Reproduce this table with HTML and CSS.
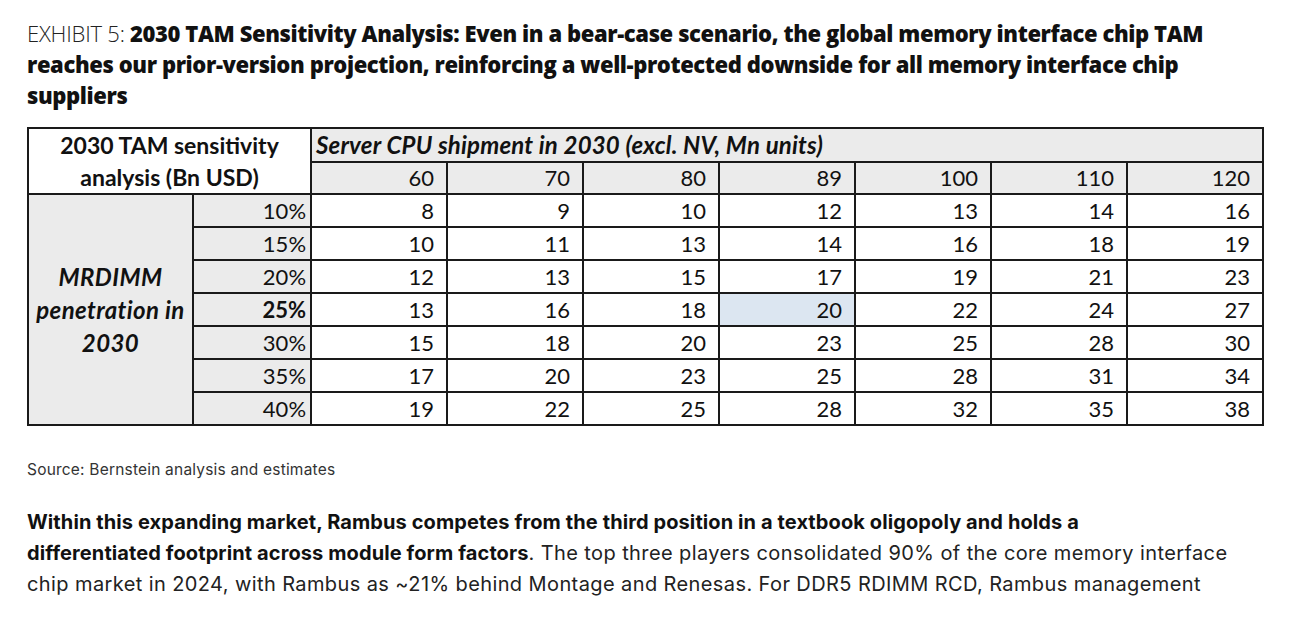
FILE: index.html
```html
<!DOCTYPE html>
<html>
<head>
<meta charset="utf-8">
<link rel="stylesheet" href="styles.css">
</head>
<body>
<div class="page">
  <h2 class="title"><span class="label">EXHIBIT 5:</span> <strong>2030 TAM Sensitivity Analysis: Even in a bear-case scenario, the global memory interface chip TAM reaches our prior-version projection, reinforcing a well-protected downside for all memory interface chip suppliers</strong></h2>

  <table class="tam">
    <colgroup>
      <col class="c-side"><col class="c-pct">
      <col class="c-num"><col class="c-num"><col class="c-num"><col class="c-num"><col class="c-num"><col class="c-num"><col class="c-num">
    </colgroup>
    <tr class="r-h1">
      <th class="corner" colspan="2" rowspan="2">2030 TAM sensitivity<br>analysis (Bn USD)</th>
      <th class="axis" colspan="7">Server CPU shipment in 2030 (excl. NV, Mn units)</th>
    </tr>
    <tr class="r-h2">
      <th class="hnum">60</th><th class="hnum">70</th><th class="hnum">80</th><th class="hnum">89</th><th class="hnum">100</th><th class="hnum">110</th><th class="hnum">120</th>
    </tr>
    <tr>
      <th class="side" rowspan="7">MRDIMM<br>penetration in<br>2030</th>
      <th class="pct">10%</th><td>8</td><td>9</td><td>10</td><td>12</td><td>13</td><td>14</td><td>16</td>
    </tr>
    <tr><th class="pct">15%</th><td>10</td><td>11</td><td>13</td><td>14</td><td>16</td><td>18</td><td>19</td></tr>
    <tr><th class="pct">20%</th><td>12</td><td>13</td><td>15</td><td>17</td><td>19</td><td>21</td><td>23</td></tr>
    <tr><th class="pct base">25%</th><td>13</td><td>16</td><td>18</td><td class="base-cell">20</td><td>22</td><td>24</td><td>27</td></tr>
    <tr><th class="pct">30%</th><td>15</td><td>18</td><td>20</td><td>23</td><td>25</td><td>28</td><td>30</td></tr>
    <tr><th class="pct">35%</th><td>17</td><td>20</td><td>23</td><td>25</td><td>28</td><td>31</td><td>34</td></tr>
    <tr><th class="pct">40%</th><td>19</td><td>22</td><td>25</td><td>28</td><td>32</td><td>35</td><td>38</td></tr>
  </table>

  <p class="source">Source: Bernstein analysis and estimates</p>

  <p class="body-text"><strong>Within this expanding market, Rambus competes from the third position in a textbook oligopoly and holds a<br>differentiated footprint across module form factors</strong>. The top three players consolidated 90% of the core memory interface chip market in 2024, with Rambus as ~21% behind Montage and Renesas. For DDR5 RDIMM RCD, Rambus management</p>
</div>
</body>
</html>
```

FILE: styles.css
```css
html, body {
  margin: 0;
  padding: 0;
  background: #ffffff;
}

.page {
  padding: 18px 0 0 27px;
  width: 1250px;
}

.title {
  margin: 0;
  font-family: "Open Sans", sans-serif;
  font-size: 22px;
  line-height: 31px;
  font-weight: 700;
  letter-spacing: -0.4px;
  color: #111;
  width: 1200px;
}

.title .label {
  font-weight: 300;
  letter-spacing: -0.2px;
  color: #222;
}

.tam {
  margin-top: 16px;
  border-collapse: collapse;
  table-layout: fixed;
  width: 1235px;
  font-family: Lato, "Liberation Sans", sans-serif;
  font-size: 22px;
  color: #111;
  border: 2px solid #1a1a1a;
}

.c-side { width: 165px; }
.c-pct { width: 118px; }
.c-num { width: 136px; }

.tam th, .tam td {
  border: 2px solid #1a1a1a;
  padding: 0 12px 0 0;
  text-align: right;
  font-weight: 400;
  height: 31px;
  line-height: 28px;
  white-space: nowrap;
}

.tam .r-h1 th { height: 32px; }
.tam .r-h2 th { height: 30px; }

.tam .corner {
  background: #ffffff;
  text-align: center;
  font-weight: 700;
  font-size: 23px;
  padding: 0;
  line-height: 32px;
}

.tam .axis {
  background: #ebebeb;
  text-align: left;
  font-style: italic;
  font-weight: 700;
  font-size: 24px;
  letter-spacing: 0.2px;
  padding-left: 4px;
}

.tam .hnum {
  background: #ebebeb;
}

.tam .side {
  background: #ebebeb;
  text-align: center;
  font-style: italic;
  font-weight: 700;
  font-size: 24px;
  letter-spacing: 0.4px;
  padding: 0;
  line-height: 33px;
  white-space: normal;
}

.tam .pct {
  background: #ebebeb;
  padding-right: 4px;
}

.tam .pct.base {
  font-weight: 700;
}

.tam .base-cell {
  background: #dce6f1;
}

.source {
  margin: 34px 0 0;
  font-family: Inter, "Liberation Sans", sans-serif;
  font-size: 15.5px;
  line-height: 19px;
  letter-spacing: 0.2px;
  color: #333;
}

.body-text {
  margin: 28px 0 0;
  font-family: Inter, "Liberation Sans", sans-serif;
  font-size: 20px;
  line-height: 31px;
  letter-spacing: 0.4px;
  color: #222;
  width: 1240px;
}

.body-text strong {
  color: #111;
  font-weight: 700;
  letter-spacing: 0.1px;
}
```
